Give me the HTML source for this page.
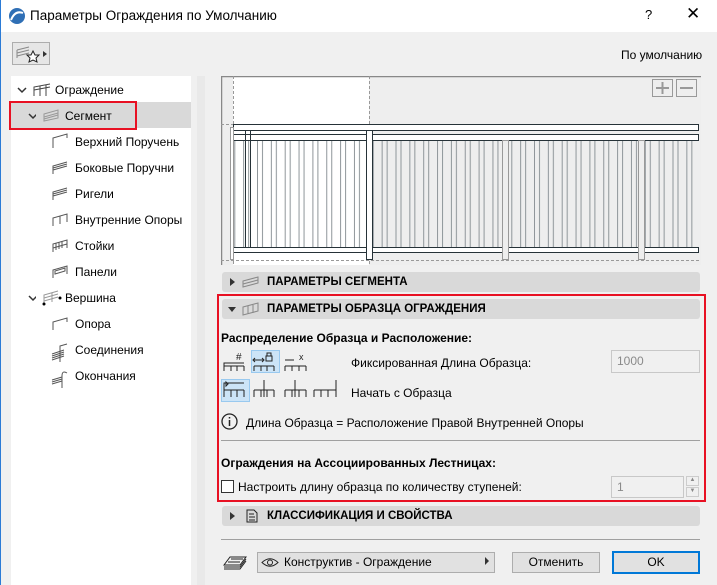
<!DOCTYPE html>
<html><head><meta charset="utf-8"><style>
*{box-sizing:border-box;margin:0;padding:0}
body{width:717px;height:585px;overflow:hidden;background:#f0f0f0;font-family:"Liberation Sans","Noto Sans CJK SC",sans-serif;font-size:12px;color:#000;position:relative}
.a{position:absolute;white-space:nowrap}
.bar{position:absolute;left:222px;width:478px;height:20px;background:#d9d9d9;border-radius:3px}
.bar span{position:absolute;left:45px;top:4px;font-weight:bold;font-size:11.5px}
.tri{position:absolute;left:8px;top:6px;width:0;height:0;border-left:5px solid #333;border-top:4px solid transparent;border-bottom:4px solid transparent}
.trid{position:absolute;left:6px;top:8px;width:0;height:0;border-top:5px solid #333;border-left:4px solid transparent;border-right:4px solid transparent}
.btn{position:absolute;height:21px;border:1px solid #adadad;background:#e1e1e1;text-align:center;line-height:19px}
.inp{position:absolute;border:1px solid #c8c8c8;background:#f0f0f0;color:#8a8a8a;padding-left:5px;line-height:20px}
.tree div{position:absolute;white-space:nowrap}
</style></head><body>
<div class="a" style="left:0;top:0;width:717px;height:32px;background:#fff"></div>
<div class="a" style="left:0;top:0;width:1px;height:585px;background:#2b7bd6"></div>
<svg class="a" style="left:8px;top:7px" width="18" height="18"><circle cx="9" cy="9" r="8" fill="#2f6fb5"/><path d="M3 13 Q7 3 15 6" stroke="#fff" stroke-width="2" fill="none"/></svg>
<div class="a" style="left:30px;top:8px;font-size:13.5px">Параметры Ограждения по Умолчанию</div>
<div class="a" style="left:645px;top:7px;font-size:13px">?</div>
<div class="a" style="left:686px;top:4px;font-size:17px">✕</div>
<div class="btn" style="left:12px;top:42px;width:38px;height:23px;background:#e6e6e6"></div>
<svg class="a" style="left:14px;top:44px" width="34" height="20"><path d="M3 6 L15 3 M3 9 L15 6 M3 12 L15 9 M3 6 V14" stroke="#888" fill="none"/><path d="M19 7 l2 4 4 0 -3 3 1 4 -4 -2 -4 2 1 -4 -3 -3 4 0z" fill="#fff" stroke="#222"/><path d="M29 7 l4 3 -4 3z" fill="#333"/></svg>
<div class="a" style="left:621px;top:48px">По умолчанию</div>

<div class="a" style="left:11px;top:76px;width:180px;height:509px;background:#fff"></div>
<div class="a" style="left:11px;top:102px;width:180px;height:26px;background:#d9d9d9"></div>
<div class="a" style="left:9px;top:101px;width:128px;height:29px;border:2px solid #e81123"></div>
<svg class="a" style="left:16px;top:85px" width="20" height="220" stroke="#333" stroke-width="1.5" fill="none"><path d="M2 3 L6 7 10 3"/><path d="M13 29 L17 33 21 29"/><path d="M13 211 L17 215 21 211"/></svg>
<div class="tree">
<svg class="a" style="left:32px;top:83px" width="20" height="14"><path d="M2 13 V4 L18 1 M8 13 V3 M14 13 V2 M2 7 L18 4" stroke="#444" fill="none"/></svg>
<div style="left:55px;top:83px">Ограждение</div>
<svg class="a" style="left:42px;top:108px" width="20" height="14"><path d="M2 6 L16 2 V10 L2 13z M2 9 L16 5 M2 11 L16 7" stroke="#999" fill="none"/></svg>
<div style="left:65px;top:109px">Сегмент</div>
<div style="left:75px;top:135px">Верхний Поручень</div>
<div style="left:75px;top:161px">Боковые Поручни</div>
<div style="left:75px;top:187px">Ригели</div>
<div style="left:75px;top:213px">Внутренние Опоры</div>
<div style="left:75px;top:239px">Стойки</div>
<div style="left:75px;top:265px">Панели</div>
<div style="left:65px;top:291px">Вершина</div>
<div style="left:75px;top:317px">Опора</div>
<div style="left:75px;top:343px">Соединения</div>
<div style="left:75px;top:369px">Окончания</div>
</div>
<svg class="a" style="left:50px;top:130px" width="20" height="260" stroke="#555" fill="none">
<path d="M3 18 V8 L17 4 V8"/>
<path d="M3 44 V36 L17 32 M3 38 L17 34 M3 40 L17 36"/>
<path d="M3 70 V62 L17 58 M3 64 L17 60 M3 66 L17 62"/>
<path d="M3 96 V88 L17 84 V92 M10 94 V86"/>
<path d="M3 122 V114 L17 110 V118 M6 120 V113 M9 119 V112 M12 118 V111 M3 118 L17 114"/>
<path d="M3 148 V140 L17 136 V144 M3 148 L3 146 M5 144 L15 141 V138 L5 141z" />
<path d="M3 200 V192 L17 188 V192"/>
<path d="M2 224 L14 220 M2 226 L14 222 M2 228 L14 224 M2 230 L14 226 M10 232 V216 L17 214"/>
<path d="M2 250 L12 247 M2 252 L12 249 M2 254 L12 251 M12 258 V246 Q12 240 17 243"/>
</svg>
<svg class="a" style="left:42px;top:290px" width="20" height="16"><path d="M2 15 V5 L16 1 M2 8 L16 4 M2 11 L16 7 M10 12 V3" stroke="#999" fill="none"/><circle cx="2" cy="14" r="1.5"/><circle cx="18" cy="8" r="1.5"/></svg>

<div class="a" style="left:197px;top:76px;width:8px;height:509px;background:#e9e9e9"></div>

<svg class="a" style="left:221px;top:76px" width="480" height="189">
<defs><pattern id="p" x="36" y="0" width="13.85" height="189" patternUnits="userSpaceOnUse"><path d="M0.5 0 V189 M5.5 0 V189" stroke="#8f969a" stroke-width="1"/></pattern></defs>
<rect x="0" y="0" width="480" height="189" fill="#eeeeee"/>
<rect x="12" y="0" width="136" height="189" fill="#fff"/>
<path d="M0.5 0 V189 M0 0.5 H480" stroke="#888" stroke-width="1.5"/>
<path d="M12.5 0 V189 M148.5 0 V189 M0 48.5 H12 M0 184.5 H480" stroke="#999" stroke-dasharray="3 2"/>
<rect x="12" y="58" width="466" height="114" fill="url(#p)"/>
<rect x="12.5" y="48.5" width="465" height="6" fill="#fff" stroke="#263238"/>
<rect x="12.5" y="58.5" width="465" height="6" fill="#fff" stroke="#263238"/>
<rect x="12.5" y="171.5" width="465" height="5" fill="#fff" stroke="#263238"/>
<path d="M24.5 54 V171 M29.5 54 V171 M12.5 54 V171" stroke="#263238"/>
<rect x="9.5" y="51.5" width="3" height="132" fill="#fff" stroke="#999"/>
<rect x="145.5" y="54.5" width="6" height="129" fill="#fff" stroke="#263238"/>
<rect x="281.5" y="64.5" width="6" height="119" fill="#eee" stroke="#999"/>
<rect x="417.5" y="64.5" width="6" height="119" fill="#eee" stroke="#999"/>
<rect x="431.5" y="3.5" width="20" height="17" fill="#eee" stroke="#999"/>
<rect x="455.5" y="3.5" width="20" height="17" fill="#eee" stroke="#999"/>
<path d="M435 12 H448 M441.5 6 V18 M459 12 H472" stroke="#999" stroke-width="2"/>
</svg>

<div class="bar" style="top:272px"><i class="tri"></i><svg class="a" style="left:20px;top:4px" width="18" height="12"><path d="M1 5 L16 1 V7 L1 11z M1 8 L16 4" stroke="#888" fill="none"/></svg><span>ПАРАМЕТРЫ СЕГМЕНТА</span></div>
<div class="a" style="left:217px;top:294px;width:489px;height:208px;border:2px solid #e81123"></div>
<div class="bar" style="top:299px"><i class="trid"></i><svg class="a" style="left:20px;top:3px" width="18" height="14"><path d="M1 5 L16 1 V9 L1 13z M6 4 V12 M11 3 V11" stroke="#888" fill="none"/></svg><span>ПАРАМЕТРЫ ОБРАЗЦА ОГРАЖДЕНИЯ</span></div>
<div class="a" style="left:221px;top:331px;font-weight:bold">Распределение Образца и Расположение:</div>
<div class="a" style="left:251px;top:350px;width:29px;height:23px;background:#cce4f7;border:1px solid #99c9ef"></div>
<div class="a" style="left:221px;top:379px;width:29px;height:23px;background:#cce4f7;border:1px solid #99c9ef"></div>
<svg class="a" style="left:222px;top:350px" width="126" height="52" stroke="#222" fill="none">
<path d="M2 21 V13 H22 M2 16 H22 M2 16 V21 M9 16 V21 M15 16 V21 M22 16 V21"/><text x="14" y="10" font-size="10" fill="#222" stroke="none" font-family="Liberation Sans">#</text>
<path d="M32 16 H52 M32 16 V21 M39 16 V21 M45 16 V21 M52 16 V21 M32 10 H41 M33 8 L31 10 33 12 M40 8 L42 10 40 12"/><rect x="44" y="6" width="6" height="5"/><path d="M45 6 V3 H49 V6"/>
<path d="M63 16 H84 M63 16 V21 M70 16 V21 M77 16 V21 M84 16 V21 M63 10 H72"/><text x="77" y="10" font-size="9" fill="#222" stroke="none" font-family="Liberation Sans">x</text>
<path d="M2 40 V33 H22 M2 40 V47 M9 40 V47 M15 40 V47 M22 40 V47 M2 40 H22 M4 32 L6 34 4 36z"/>
<path d="M32 40 H52 M32 40 V47 M39 40 V47 M45 40 V47 M52 40 V47 M42 30 V47"/>
<path d="M63 40 H84 M63 40 V47 M70 40 V47 M77 40 V47 M84 40 V47 M73 30 V47"/>
<path d="M92 40 H114 M92 40 V47 M99 40 V47 M106 40 V47 M114 30 V47"/>
</svg>
<div class="a" style="left:351px;top:356px">Фиксированная Длина Образца:</div>
<div class="inp" style="left:611px;top:350px;width:89px;height:23px">1000</div>
<div class="a" style="left:351px;top:386px">Начать с Образца</div>
<svg class="a" style="left:221px;top:413px" width="18" height="18"><circle cx="8.5" cy="8.5" r="7.5" stroke="#222" fill="none" stroke-width="1.3"/><path d="M8.5 7 V13 M8.5 4 V5.5" stroke="#222" stroke-width="1.5"/></svg>
<div class="a" style="left:246px;top:416px">Длина Образца = Расположение Правой Внутренней Опоры</div>
<div class="a" style="left:221px;top:440px;width:479px;height:1px;background:#a0a0a0"></div>
<div class="a" style="left:221px;top:456px;font-weight:bold">Ограждения на Ассоциированных Лестницах:</div>
<div class="a" style="left:221px;top:480px;width:13px;height:13px;border:1px solid #333;background:#fff"></div>
<div class="a" style="left:238px;top:480px">Настроить длину образца по количеству ступеней:</div>
<div class="inp" style="left:611px;top:476px;width:73px;height:22px">1</div>
<div class="a" style="left:686px;top:476px;width:13px;height:10px;border:1px solid #ccc;font-size:6px;text-align:center;color:#888">▲</div>
<div class="a" style="left:686px;top:487px;width:13px;height:10px;border:1px solid #ccc;font-size:6px;text-align:center;color:#888">▼</div>

<div class="bar" style="top:506px"><i class="tri"></i><svg class="a" style="left:24px;top:3px" width="12" height="14"><path d="M1 1 H8 L11 4 V13 H1z M3 5 H8 M3 8 H9 M3 11 H9" stroke="#222" fill="none"/></svg><span>КЛАССИФИКАЦИЯ И СВОЙСТВА</span></div>
<div class="a" style="left:221px;top:539px;width:479px;height:1px;background:#a0a0a0"></div>
<svg class="a" style="left:222px;top:553px" width="28" height="18" stroke="#222" fill="none"><path d="M2 12 L8 4 H24 L18 12z M2 14 H18 L24 6 M2 16 H18 L24 8 M6 9 H18 M9 6 H21"/></svg>
<div class="btn" style="left:257px;top:552px;width:238px;text-align:left;padding-left:26px">Конструктив - Ограждение</div>
<svg class="a" style="left:261px;top:557px" width="18" height="11"><path d="M1 5.5 Q9 -2 17 5.5 Q9 13 1 5.5z" stroke="#222" fill="none"/><circle cx="9" cy="5.5" r="2.5" stroke="#222" fill="none"/></svg>
<div class="a" style="left:485px;top:557px;width:0;height:0;border-left:4px solid #333;border-top:4px solid transparent;border-bottom:4px solid transparent"></div>
<div class="btn" style="left:512px;top:552px;width:88px">Отменить</div>
<div class="btn" style="left:612px;top:551px;width:88px;height:23px;border:2px solid #0078d7;line-height:19px">OK</div>
</body></html>
